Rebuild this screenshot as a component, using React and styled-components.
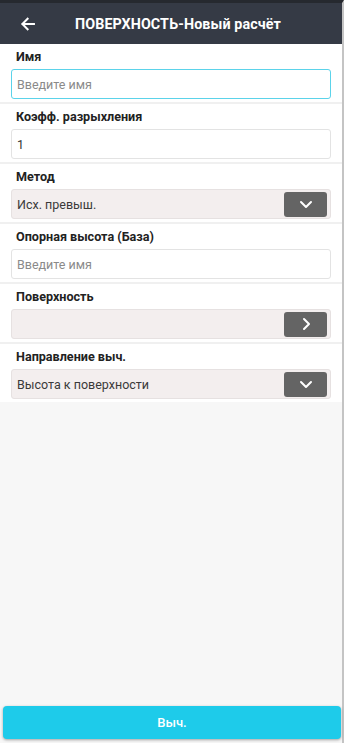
import React from 'react';
import styled, { createGlobalStyle } from 'styled-components';

const GlobalStyle = createGlobalStyle`
    html, body {
        margin: 0;
        padding: 0;
        height: 100%;
    }
    body {
        font-family: Roboto, "Noto Sans", "Liberation Sans", sans-serif;
        background: #f7f7f7;
    }
    #root {
        height: 100%;
    }
`;

const Page = styled.div`
    display: flex;
    flex-direction: column;
    height: 743px;
    background: #f7f7f7;
    border-top: 3px solid #26292f;
    border-right: 2px solid #c4c4c4;
    box-sizing: border-box;
`;

const Header = styled.header`
    display: flex;
    align-items: center;
    height: 41px;
    background: #353a45;
    color: #fff;
    flex-shrink: 0;
`;

const BackButton = styled.button`
    display: flex;
    align-items: center;
    justify-content: center;
    width: 40px;
    height: 40px;
    margin-left: 8px;
    padding: 0;
    background: none;
    border: none;
    color: #fff;
`;

const Title = styled.h1`
    margin: 0 0 0 27px;
    font-size: 14.3px;
    font-weight: 700;
    letter-spacing: 0.1px;
`;

const Form = styled.div`
    display: flex;
    flex-direction: column;
    gap: 2px;
    background: #f0f0f0;
`;

const Section = styled.div`
    display: flex;
    flex-direction: column;
    gap: 5px;
    padding: 6px 11px 3px 11px;
    background: #fff;
`;

const Label = styled.div`
    font-size: 12.6px;
    font-weight: 700;
    color: #222;
    line-height: 14px;
    padding-left: 5px;
`;

const Input = styled.input`
    box-sizing: border-box;
    width: 100%;
    height: 30px;
    padding: 0 5px;
    border: 1px solid ${({ $focused }) => ($focused ? '#5bd3ea' : '#e3e3e3')};
    border-radius: 3px;
    font-family: inherit;
    font-size: 12.5px;
    color: #333;
    background: #fff;
    outline: none;

    &::placeholder {
        color: #8a8a8a;
    }
`;

const Select = styled.div`
    box-sizing: border-box;
    display: flex;
    align-items: center;
    justify-content: space-between;
    height: 30px;
    padding: 0 3px 0 5px;
    border: 1px solid #e6e1e1;
    border-radius: 3px;
    background: #f3eeee;
    font-size: 12.5px;
    color: #3a3a3a;
`;

const SelectButton = styled.div`
    display: flex;
    align-items: center;
    justify-content: center;
    width: 43px;
    height: 25px;
    border-radius: 3px;
    background: #646464;
    color: #fff;
`;

const Spacer = styled.div`
    flex: 1;
`;

const Footer = styled.div`
    padding: 3px 1px 4px 3px;
`;

const SubmitButton = styled.button`
    width: 100%;
    height: 33px;
    border: none;
    border-radius: 4px;
    background: #1ecbea;
    color: #fff;
    font-family: inherit;
    font-size: 13px;
    font-weight: 500;
    box-shadow: 0 1px 3px rgba(0, 0, 0, 0.35);
`;

const ArrowLeft = () => (
    <svg width="18" height="18" viewBox="0 0 24 24" fill="none" stroke="currentColor" strokeWidth="2.6" strokeLinecap="square">
        <path d="M20 12H5" />
        <path d="M11.5 5L4.5 12l7 7" />
    </svg>
);

const Chevron = ({ dir }) => (
    <svg width="16" height="16" viewBox="0 0 16 16" fill="none" stroke="currentColor" strokeWidth="2" strokeLinecap="round" strokeLinejoin="round">
        {dir === 'right' ? <path d="M6 3l5 5-5 5" /> : <path d="M3 6l5 5 5-5" />}
    </svg>
);

const fields = [
    { label: 'Имя', type: 'input', placeholder: 'Введите имя', focused: true },
    { label: 'Коэфф. разрыхления', type: 'input', value: '1' },
    { label: 'Метод', type: 'select', value: 'Исх. превыш.', dir: 'down' },
    { label: 'Опорная высота (База)', type: 'input', placeholder: 'Введите имя' },
    { label: 'Поверхность', type: 'select', value: '', dir: 'right' },
    { label: 'Направление выч.', type: 'select', value: 'Высота к поверхности', dir: 'down' },
];

const App = () => {
    return (
        <>
            <GlobalStyle />
            <Page>
                <Header>
                    <BackButton><ArrowLeft /></BackButton>
                    <Title>ПОВЕРХНОСТЬ-Новый расчёт</Title>
                </Header>
                <Form>
                    {fields.map((f) => (
                        <Section key={f.label}>
                            <Label>{f.label}</Label>
                            {f.type === 'input' ? (
                                <Input
                                    $focused={f.focused}
                                    placeholder={f.placeholder}
                                    defaultValue={f.value}
                                />
                            ) : (
                                <Select>
                                    <span>{f.value}</span>
                                    <SelectButton><Chevron dir={f.dir} /></SelectButton>
                                </Select>
                            )}
                        </Section>
                    ))}
                </Form>
                <Spacer />
                <Footer>
                    <SubmitButton>Выч.</SubmitButton>
                </Footer>
            </Page>
        </>
    );
};

export default App;
